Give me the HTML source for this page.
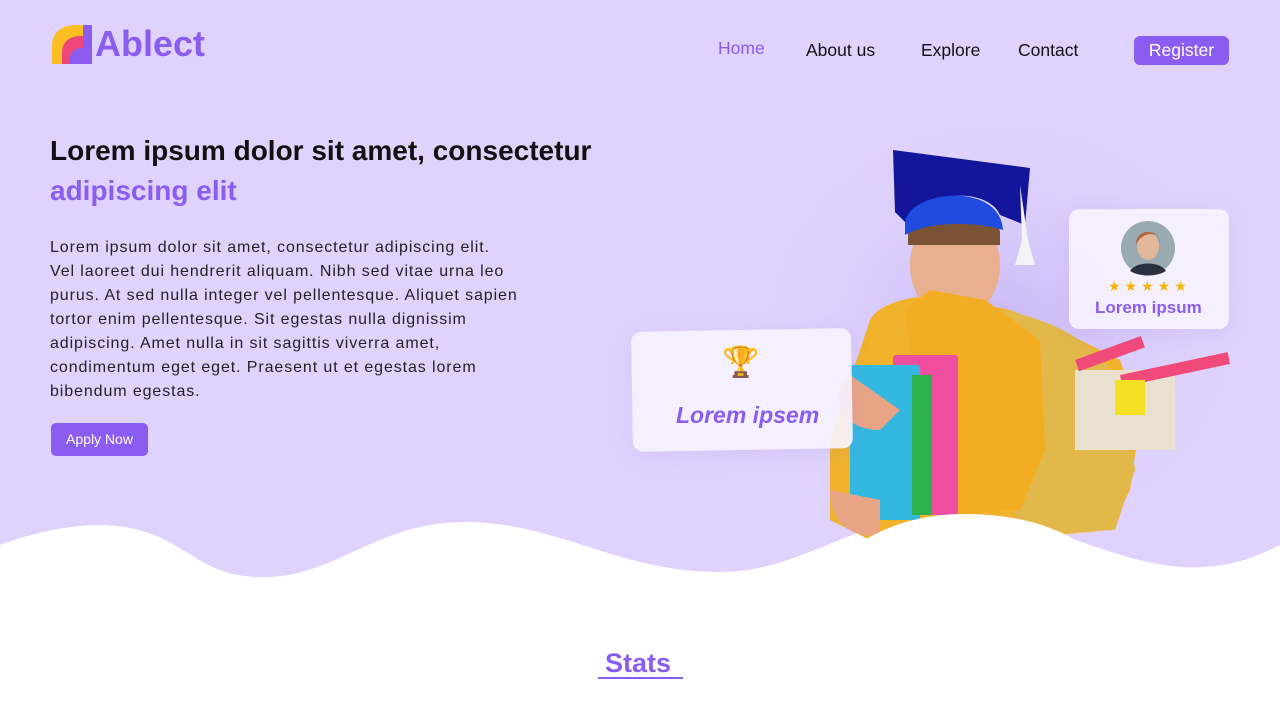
<!DOCTYPE html>
<html><head><meta charset="utf-8"><style>
*{margin:0;padding:0;box-sizing:border-box}
body{width:1280px;height:720px;overflow:hidden;background:#fff;font-family:"Liberation Sans",sans-serif;position:relative}
.hero{position:absolute;left:0;top:0;width:1280px;height:600px;background:#dfd3fd}
.abs{position:absolute}
.nav a{position:absolute;font-size:17.5px;color:#111;text-decoration:none;top:40px}
.card{position:absolute;background:rgba(247,243,255,.9);border-radius:10px;box-shadow:0 4px 20px rgba(150,120,220,.15)}
</style></head><body>
<div class="hero"></div>
<svg class="abs" style="left:0;top:0" width="1280" height="720">
<defs><radialGradient id="g" cx="50%" cy="50%" r="50%"><stop offset="0" stop-color="#c9b6f6"/><stop offset="1" stop-color="#dfd3fd" stop-opacity="0"/></radialGradient></defs>
<ellipse cx="1000" cy="330" rx="260" ry="230" fill="url(#g)"/>
<path d="M0 545 C40 530 90 520 130 528 C190 540 200 580 270 577 C340 574 380 520 470 522 C560 524 620 572 720 572 C800 572 850 520 940 515 C1040 512 1100 560 1180 567 C1230 570 1260 555 1280 545 L1280 720 L0 720Z" fill="#fff"/>
<path d="M52 64 L52 46 C52 32 62 25 76 25 L84 25 L84 64 Z" fill="#fbbf24"/>
<path d="M62 64 L62 52 C62 42 70 36 80 36 L88 36 L88 64Z" fill="#f0457a"/>
<path d="M70 64 L70 58 C70 52 76 48 82 48 L88 48 L88 64Z" fill="#8a5cf0"/>
<rect x="83" y="25" width="9" height="39" fill="#8a5cf0"/>
<path d="M870 320 C880 300 930 290 960 300 L1010 310 L1060 330 L1120 360 L1140 420 L1130 490 L1110 530 L1000 540 L870 540 L830 520 L830 440 Z" fill="#f1b22c"/>
<path d="M1000 310 C1060 320 1110 350 1125 400 L1135 470 L1115 530 L1020 535 L990 420 Z" fill="#e2b84a"/>
<rect x="1075" y="370" width="100" height="80" fill="#e9e0d0"/>
<rect x="1120" y="375" width="110" height="12" fill="#f04a7a" transform="rotate(-12 1120 375)"/>
<rect x="1075" y="360" width="70" height="12" fill="#f04a7a" transform="rotate(-20 1075 360)"/>
<rect x="1115" y="380" width="30" height="35" fill="#f5e023"/>
<ellipse cx="955" cy="265" rx="45" ry="55" fill="#e8b08e"/>
<path d="M908 232 C912 205 995 200 1000 232 L1000 245 L908 245Z" fill="#7a5236"/>
<path d="M893 150 L1030 168 L1025 225 L1000 215 C990 190 930 185 908 225 L895 212Z" fill="#13169a"/>
<path d="M905 225 C905 190 1000 180 1003 230 C980 222 930 220 905 235Z" fill="#1f4be0"/>
<path d="M1020 185 L1022 240 L1015 265 L1035 265 L1028 240Z" fill="#f3f3f6"/>
<path d="M905 310 L930 290 L985 300 L1040 340 L1045 450 L1020 510 L935 515 Z" fill="#f3ad23"/>
<rect x="893" y="355" width="65" height="160" fill="#f04fa0" rx="3"/>
<rect x="850" y="365" width="70" height="155" fill="#33b8e0" rx="3"/>
<rect x="912" y="375" width="20" height="140" fill="#2bb24c"/>
<path d="M850 375 C830 390 835 430 880 430 L900 410 Z" fill="#e8a585"/>
<path d="M830 490 C830 520 850 540 880 535 L880 500Z" fill="#e8a585"/>
<path d="M820 580 C850 540 900 515 960 514 C1040 513 1090 540 1120 580Z" fill="#fff"/>
</svg>
<div class="abs" style="left:95px;top:23px;font-size:36px;font-weight:bold;color:#8a5cf0">Ablect</div>
<div class="nav">
<a style="left:718px;top:38px;color:#8a5cf0">Home</a>
<a style="left:806px">About us</a>
<a style="left:921px">Explore</a>
<a style="left:1018px">Contact</a>
</div>
<div class="abs" style="left:1134px;top:36px;width:95px;height:29px;background:#8a5cf0;border-radius:6px;color:#fff;font-size:17.5px;text-align:center;line-height:29px">Register</div>
<div class="abs" style="left:50px;top:135px;font-size:28px;font-weight:bold;color:#111">Lorem ipsum dolor sit amet, consectetur</div>
<div class="abs" style="left:50px;top:175px;font-size:28px;font-weight:bold;color:#8a5cf0">adipiscing elit</div>
<div class="abs" style="left:50px;top:236px;white-space:nowrap;font-size:16px;line-height:24px;color:#222;letter-spacing:0.9px">Lorem ipsum dolor sit amet, consectetur adipiscing elit.<br>Vel laoreet dui hendrerit aliquam. Nibh sed vitae urna leo<br>purus. At sed nulla integer vel pellentesque. Aliquet sapien<br>tortor enim pellentesque. Sit egestas nulla dignissim<br>adipiscing. Amet nulla in sit sagittis viverra amet,<br>condimentum eget eget. Praesent ut et egestas lorem<br>bibendum egestas.</div>
<div class="abs" style="left:51px;top:423px;width:97px;height:33px;background:#8a5cf0;border-radius:5px;color:#fff;font-size:14px;text-align:center;line-height:33px">Apply Now</div>
<div class="card" style="left:632px;top:330px;width:220px;height:120px;transform:rotate(-1deg)"></div>
<div class="abs" style="left:722px;top:345px;font-size:30px">🏆</div>
<div class="abs" style="left:676px;top:402px;font-size:23px;font-weight:bold;font-style:italic;color:#8a5cf0">Lorem ipsem</div>
<div class="card" style="left:1069px;top:209px;width:160px;height:120px"></div>
<svg class="abs" style="left:0;top:0" width="1280" height="720">
<circle cx="1148" cy="248" r="27" fill="#9aaab3"/><ellipse cx="1148" cy="246" rx="11" ry="14" fill="#e2b89a"/>
<path d="M1136 244 C1136 228 1160 228 1160 244 L1158 236 C1150 232 1142 234 1136 244Z" fill="#b0603a"/>
<path d="M1130 271 C1136 261 1160 261 1166 271 C1156 277 1140 277 1130 271Z" fill="#2a3040"/>
</svg>
<div class="abs" style="left:1108px;top:278px;font-size:14px;color:#f5b400;letter-spacing:4px">★★★★★</div>
<div class="abs" style="left:1095px;top:298px;font-size:17px;font-weight:bold;color:#8a5cf0">Lorem ipsum</div>
<div class="abs" style="left:605px;top:648px;font-size:27px;font-weight:bold;color:#8a5cf0">Stats</div>
<div class="abs" style="left:598px;top:677px;width:85px;height:2px;background:#8a5cf0"></div>
</body></html>
